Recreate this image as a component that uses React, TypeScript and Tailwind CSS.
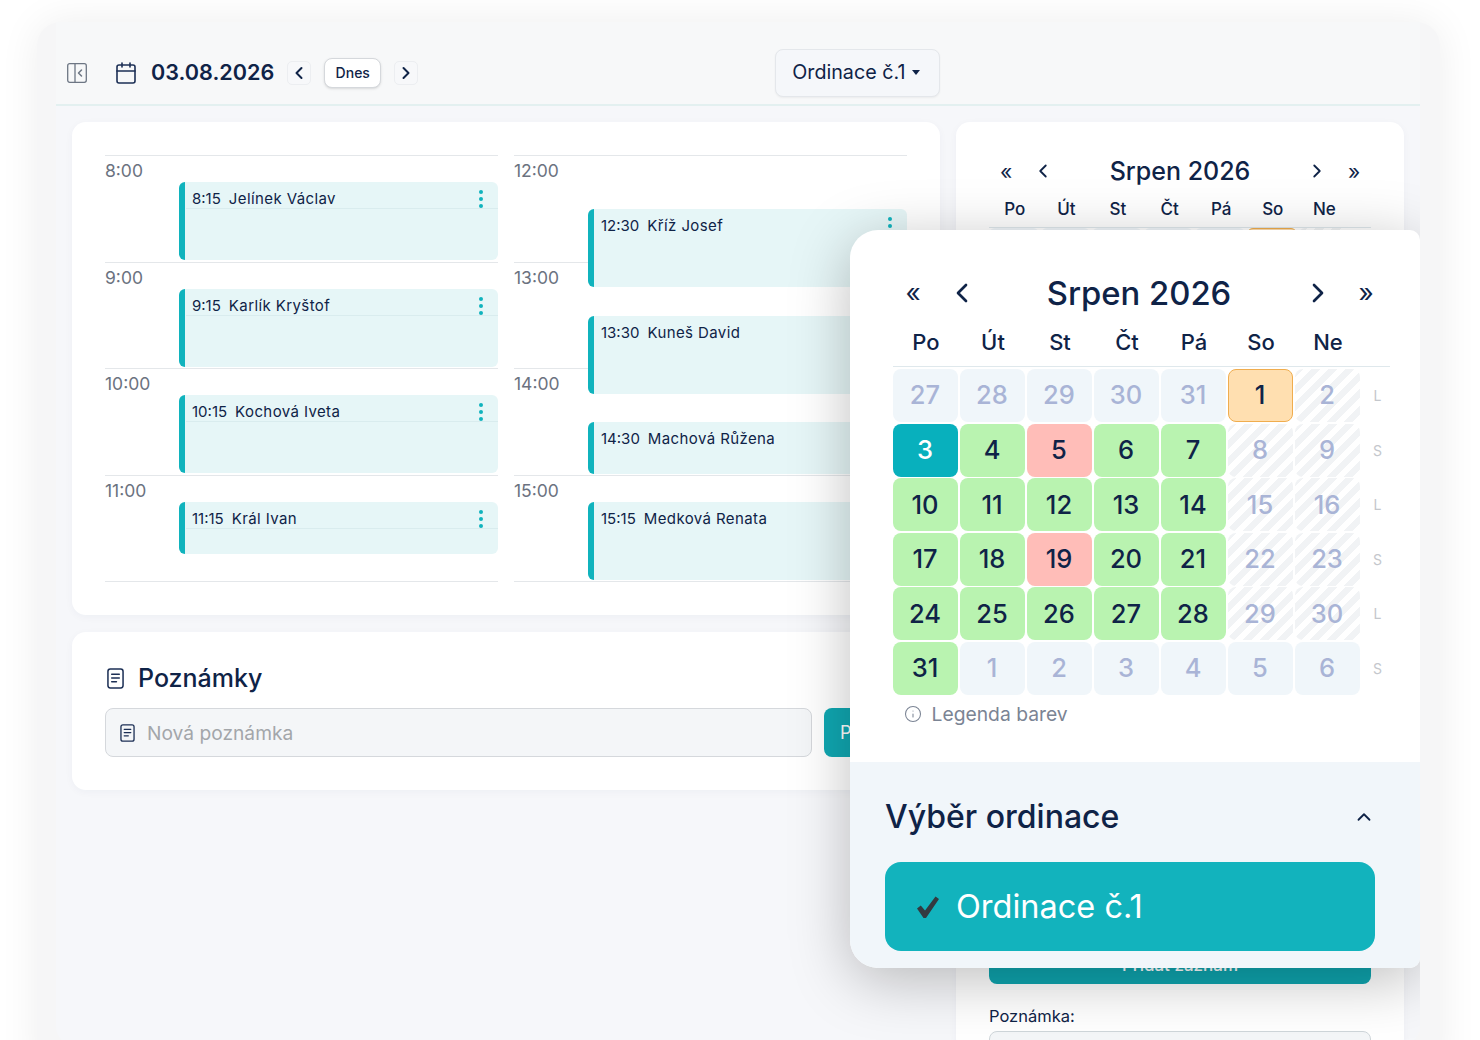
import { Calendar, ChevronLeft, ChevronRight, ChevronUp, Info } from 'lucide-react';

const FONT = "font-['Inter','Noto_Sans',sans-serif]";

type Appt = { hour: string; time?: string; name?: string; top?: number; height?: number };

const leftCol: Appt[] = [
  { hour: '8:00', time: '8:15', name: 'Jelínek Václav', top: 26, height: 78 },
  { hour: '9:00', time: '9:15', name: 'Karlík Kryštof', top: 26, height: 78 },
  { hour: '10:00', time: '10:15', name: 'Kochová Iveta', top: 26, height: 78 },
  { hour: '11:00', time: '11:15', name: 'Král Ivan', top: 26, height: 52 },
];

const rightCol: Appt[] = [
  { hour: '12:00', time: '12:30', name: 'Kříž Josef', top: 53, height: 78 },
  { hour: '13:00', time: '13:30', name: 'Kuneš David', top: 53, height: 78 },
  { hour: '14:00', time: '14:30', name: 'Machová Růžena', top: 53, height: 52 },
  { hour: '15:00', time: '15:15', name: 'Medková Renata', top: 26, height: 78 },
];

const dayNames = ['Po', 'Út', 'St', 'Čt', 'Pá', 'So', 'Ne'];

type Kind = 'other' | 'free' | 'busy' | 'today' | 'sel' | 'off';
type Day = { n: number; kind: Kind };

const d = (n: number, kind: Kind): Day => ({ n, kind });

const weeks: { letter: string; days: Day[] }[] = [
  { letter: 'L', days: [d(27, 'other'), d(28, 'other'), d(29, 'other'), d(30, 'other'), d(31, 'other'), d(1, 'sel'), d(2, 'off')] },
  { letter: 'S', days: [d(3, 'today'), d(4, 'free'), d(5, 'busy'), d(6, 'free'), d(7, 'free'), d(8, 'off'), d(9, 'off')] },
  { letter: 'L', days: [d(10, 'free'), d(11, 'free'), d(12, 'free'), d(13, 'free'), d(14, 'free'), d(15, 'off'), d(16, 'off')] },
  { letter: 'S', days: [d(17, 'free'), d(18, 'free'), d(19, 'busy'), d(20, 'free'), d(21, 'free'), d(22, 'off'), d(23, 'off')] },
  { letter: 'L', days: [d(24, 'free'), d(25, 'free'), d(26, 'free'), d(27, 'free'), d(28, 'free'), d(29, 'off'), d(30, 'off')] },
  { letter: 'S', days: [d(31, 'free'), d(1, 'other'), d(2, 'other'), d(3, 'other'), d(4, 'other'), d(5, 'other'), d(6, 'other')] },
];

const kindClass: Record<Kind, string> = {
  other: 'bg-[#f0f6fa] text-[#a9b4d6]',
  free: 'bg-[#b9f3b0] text-[#0f2347]',
  busy: 'bg-[#ffbdb8] text-[#0f2347]',
  today: 'bg-[#08b0bd] text-white',
  sel: 'bg-[#ffdfb0] text-[#0f2347] border border-[#f0ad4e]',
  off: 'bg-[repeating-linear-gradient(135deg,#f1f3f5_0,#f1f3f5_6px,#ffffff_6px,#ffffff_12px)] text-[#a9b4d6]',
};

function NoteIcon({ className }: { className?: string }) {
  return (
    <svg viewBox="0 0 18 22" fill="none" stroke="#1c2f55" strokeWidth="1.6" strokeLinecap="round" className={className}>
      <rect x="1" y="1" width="16" height="20" rx="2.5" />
      <path d="M5 6.5h8M5 10.5h8M5 14.5h5" />
    </svg>
  );
}

function SidebarIcon() {
  return (
    <svg viewBox="0 0 20 20" fill="none" stroke="#6d7684" strokeWidth="1.3" className="h-5 w-5">
      <rect x="0.7" y="0.7" width="18.6" height="18.6" rx="2" />
      <path d="M8 0.7v18.6" />
      <path d="M14.5 7l-3 3 3 3" strokeWidth="1.5" strokeLinecap="round" strokeLinejoin="round" />
    </svg>
  );
}

function Dots() {
  return (
    <svg viewBox="0 0 6 20" className="h-5 w-[6px] fill-[#10b3bd]">
      <circle cx="3" cy="3" r="2" />
      <circle cx="3" cy="10" r="2" />
      <circle cx="3" cy="17" r="2" />
    </svg>
  );
}

function ScheduleColumn({ rows, divider }: { rows: Appt[]; divider?: boolean }) {
  return (
    <div className="w-[393px] self-start border-b border-[#e4e7ea]">
      {rows.map((r) => (
        <div key={r.hour} className="flex h-[106.5px] border-t border-[#e4e7ea]">
          <div className="w-[74px] shrink-0 pt-[4px] text-[17.5px] leading-[22px] text-[#6b7280]">{r.hour}</div>
          <div
            style={{ marginTop: r.top, height: r.height }}
            className="w-[319px] overflow-hidden rounded-[6px] border-l-[6px] border-[#10b3bd] bg-[#e6f6f7]"
          >
            <div
              className={`ml-[1px] flex h-[27px] items-start justify-between pl-[6px] pr-[14px] pt-[7px] text-[15px] leading-[20px] text-[#0f2347] ${
                divider ? 'border-b border-[#d9ecee]' : ''
              }`}
            >
              <div className="flex gap-2">
                <span>{r.time}</span>
                <span className="tracking-[0.4px]">{r.name}</span>
              </div>
              <Dots />
            </div>
          </div>
        </div>
      ))}
    </div>
  );
}

function Popup() {
  return (
    <div className="absolute left-[794px] top-[208px] w-[570px] overflow-hidden rounded-l-[28px] rounded-r-[10px] bg-white shadow-[0_12px_60px_rgba(0,0,0,0.26)]">
      <div className="h-[532px] pl-[42.5px] pt-[43px]">
        <div className="relative flex h-[40px] w-[497px] items-center justify-center text-[#0f2347]">
          <span className="absolute left-[13px] text-[26px] leading-none">«</span>
          <ChevronLeft className="absolute left-[53px] h-8 w-8" strokeWidth={2} />
          <span className="pr-[4px] text-[32.8px] font-medium leading-none">Srpen 2026</span>
          <ChevronRight className="absolute left-[409px] h-8 w-8" strokeWidth={2} />
          <span className="absolute left-[466px] text-[26px] leading-none">»</span>
        </div>
        <div className="mt-[4px] flex h-[50px] w-[497px] border-b border-[#dfe8ec] pt-[2px]">
          {dayNames.map((n) => (
            <div key={n} className="flex w-[67px] items-center justify-center text-[22px] font-medium text-[#0f2347]">
              {n}
            </div>
          ))}
        </div>
        <div className="mt-[2px] grid grid-cols-[repeat(7,65px)_28px] gap-x-[2px] gap-y-[1.6px]">
          {weeks.map((w, i) => (
            <div key={i} className="contents">
              {w.days.map((c, j) => (
                <div
                  key={j}
                  className={`flex h-[53px] items-center justify-center rounded-[8px] text-[25.5px] font-medium ${kindClass[c.kind]}`}
                >
                  {c.n}
                </div>
              ))}
              <div className="flex items-center justify-center pl-[4px] text-[14px] text-[#c4c7cc]">{w.letter}</div>
            </div>
          ))}
        </div>
        <div className="mt-[5px] flex h-[28px] items-center gap-[10px] pl-[11px] text-[19.3px] text-[#7b8494]">
          <Info className="h-[18px] w-[18px]" strokeWidth={1.4} />
          <span>Legenda barev</span>
        </div>
      </div>
      <div className="h-[206px] bg-[#f1f6fa] pl-[35px] pt-[35px]">
        <div className="flex h-[40px] w-[490px] items-center justify-between">
          <span className="text-[32px] font-medium text-[#0f2347]">Výběr ordinace</span>
          <ChevronUp className="h-[22px] w-[22px] text-[#0f2347]" strokeWidth={2} />
        </div>
        <div className="mt-[25px] flex h-[89px] w-[490px] items-center gap-[16px] rounded-[16px] bg-[#12b3bd] pl-[31px] pt-[1px] text-[32.5px] text-white">
          <svg viewBox="0 0 24 24" className="h-[24px] w-[24px] fill-[#333a40]">
            <path d="M1 13.5l3.8-3 4.2 5L19.5 1.5 23 4 10 23h-2.5z" />
          </svg>
          <span>Ordinace č.1</span>
        </div>
      </div>
    </div>
  );
}

export default function App() {
  return (
    <div className={`h-[1040px] w-[1480px] overflow-hidden bg-white pl-[37px] pt-[22px] ${FONT}`}>
      <div className="h-[1060px] w-[1403px] rounded-[24px] bg-[#f6f6f7] pl-[19px] shadow-[0_0_40px_rgba(0,0,0,0.07)]">
        <div className="relative h-[1024px] w-[1364px] overflow-hidden rounded-b-[20px] bg-[#f6f7fa]">
          {/* top bar */}
          <div className="flex h-[84px] items-center border-b-2 border-[#e3f0f0] bg-[#f7f8f9] pl-[11px] pt-[19px]">
            <SidebarIcon />
            <Calendar className="ml-[27px] h-[24px] w-[24px] text-[#1c2f55]" strokeWidth={1.6} />
            <span className="ml-[13px] text-[21.6px] font-semibold leading-none text-[#0f2347]">03.08.2026</span>
            <button className="ml-[13px] flex h-[24px] w-[24px] items-center justify-center rounded-[5px] border border-[#eceef1] bg-[#f7f8fa]">
              <ChevronLeft className="h-[20px] w-[20px] text-[#0f2347]" strokeWidth={2.4} />
            </button>
            <button className="ml-[13px] h-[30px] w-[57px] rounded-[8px] border border-[#d5d8dc] bg-white text-[14px] font-medium text-[#0f2347] shadow-sm">
              Dnes
            </button>
            <button className="ml-[13px] flex h-[24px] w-[24px] items-center justify-center rounded-[5px] border border-[#eceef1] bg-[#f7f8fa]">
              <ChevronRight className="h-[20px] w-[20px] text-[#0f2347]" strokeWidth={2.4} />
            </button>
            <div className="ml-[357px] flex h-[48px] w-[165px] items-center gap-[7px] rounded-[8px] border border-[#e4e7eb] bg-[#f5f7fa] pl-[16px] text-[19.7px] text-[#0f2347] shadow-[0_1px_2px_rgba(0,0,0,0.05)]">
              <span>Ordinace č.1</span>
              <span className="h-0 w-0 border-x-[4px] border-t-[5px] border-x-transparent border-t-[#0f2347]" />
            </div>
          </div>

          <div className="flex gap-[16px] px-[16px] pt-[16px]">
            <div className="flex w-[868px] flex-col gap-[17px]">
              <div className="flex h-[493px] gap-[16px] rounded-[14px] bg-white pl-[33px] pt-[33px] shadow-[0_2px_8px_rgba(30,50,90,0.04)]">
                <ScheduleColumn rows={leftCol} divider />
                <ScheduleColumn rows={rightCol} />
              </div>
              <div className="h-[158px] rounded-[14px] bg-white px-[33px] pt-[30px] shadow-[0_2px_8px_rgba(30,50,90,0.04)]">
                <div className="flex h-[32px] items-center gap-[14px] pl-[2px]">
                  <NoteIcon className="h-[21px] w-[17px]" />
                  <span className="pt-[2px] text-[25px] font-medium text-[#0f2347]">Poznámky</span>
                </div>
                <div className="mt-[14px] flex gap-[12px]">
                  <div className="flex h-[49px] w-[707px] shrink-0 items-center gap-[12px] rounded-[8px] border border-[#d5d8dc] bg-[#f4f6f8] pl-[14px] text-[19.2px] text-[#a3a6aa]">
                    <NoteIcon className="h-[18px] w-[15px]" />
                    <span className="pt-[2px]">Nová poznámka</span>
                  </div>
                  <button className="h-[49px] w-[100px] shrink-0 rounded-[8px] bg-[#10a8b2] pl-[16px] text-left text-[18px] text-white">
                    Přidat
                  </button>
                </div>
              </div>
            </div>

            {/* right side calendar panel, mostly under the popup */}
            <div className="h-[930px] w-[448px] rounded-[14px] bg-white px-[33px] pt-[30px] shadow-[0_2px_8px_rgba(30,50,90,0.04)]">
              <div className="relative flex h-[38px] items-center justify-center text-[#0f2347]">
                <span className="absolute left-[11px] text-[21px] leading-none">«</span>
                <ChevronLeft className="absolute left-[43px] h-[22px] w-[22px]" strokeWidth={2} />
                <span className="text-[25px] font-medium leading-none">Srpen 2026</span>
                <ChevronRight className="absolute left-[317px] h-[22px] w-[22px]" strokeWidth={2} />
                <span className="absolute left-[359px] text-[21px] leading-none">»</span>
              </div>
              <div className="flex h-[38px] border-b border-[#dfe8ec] pt-[2px]">
                {dayNames.map((n) => (
                  <div key={n} className="flex h-[36px] w-[51.6px] items-center justify-center text-[17px] font-medium text-[#0f2347]">
                    {n}
                  </div>
                ))}
              </div>
              <div className="h-[712px]">
                <div className="flex gap-[2px]">
                  {weeks[0].days.map((c, j) => (
                    <div key={j} className={`h-[40px] w-[49.6px] rounded-[6px] ${kindClass[c.kind]}`} />
                  ))}
                </div>
              </div>
              <button className="h-[44px] w-[382px] rounded-[8px] bg-[#0fa5af] pt-[8px] text-[17px] font-medium text-white">
                Přidat záznam
              </button>
              <div className="mt-[22px] text-[16.5px] leading-[20px] text-[#0f2347]">Poznámka:</div>
              <div className="mt-[5px] h-[48px] w-[382px] rounded-[8px] border border-[#cfd6da] bg-[#f4f6f8]" />
            </div>
          </div>

          <Popup />
        </div>
      </div>
    </div>
  );
}
